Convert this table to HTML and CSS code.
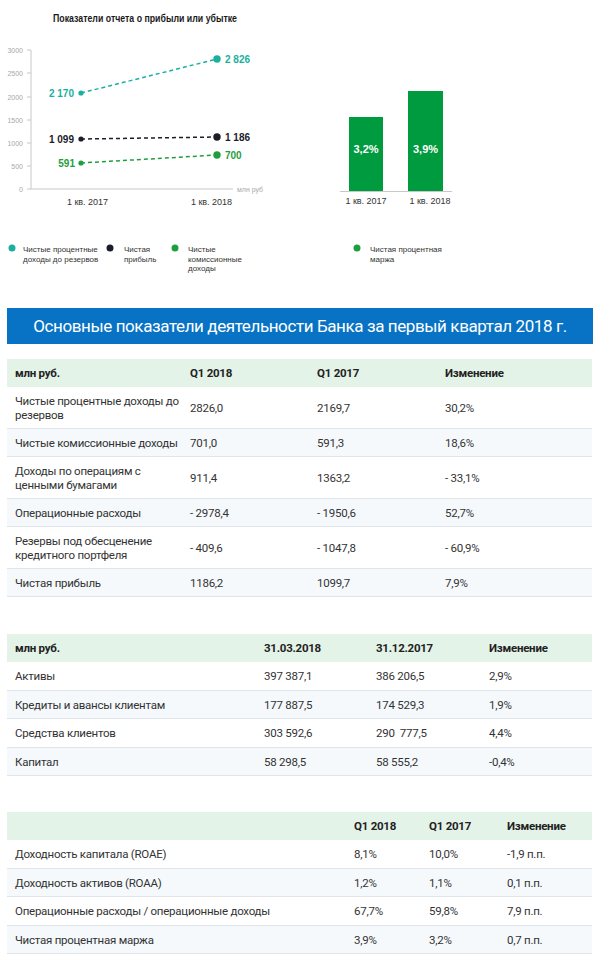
FILE: index.html
```html
<!DOCTYPE html>
<html lang="ru">
<head>
<meta charset="utf-8">
<title>Показатели</title>
<link rel="stylesheet" href="styles.css">
</head>
<body>
<div class="charts">
<svg class="chart-svg" width="600" height="300" viewBox="0 0 600 300" xmlns="http://www.w3.org/2000/svg">
  <text class="c-title" x="53" y="22" textLength="184" lengthAdjust="spacingAndGlyphs">Показатели отчета о прибыли  или убытке</text>
  <!-- axes -->
  <line x1="31" y1="50" x2="31" y2="189" class="c-axis"/>
  <line x1="31" y1="189" x2="233" y2="189" class="c-axis"/>
  <g class="c-ticks">
    <line x1="27" y1="50" x2="31" y2="50"/>
    <line x1="27" y1="73" x2="31" y2="73"/>
    <line x1="27" y1="97" x2="31" y2="97"/>
    <line x1="27" y1="120" x2="31" y2="120"/>
    <line x1="27" y1="143" x2="31" y2="143"/>
    <line x1="27" y1="166" x2="31" y2="166"/>
    <line x1="27" y1="189" x2="31" y2="189"/>
  </g>
  <g class="c-ylab">
    <text x="23" y="52.5">3000</text>
    <text x="23" y="75.5">2500</text>
    <text x="23" y="99.5">2000</text>
    <text x="23" y="122.5">1500</text>
    <text x="23" y="145.5">1000</text>
    <text x="23" y="168.5">500</text>
    <text x="23" y="191.5">0</text>
  </g>
  <text class="c-unit" x="237" y="191.5">млн руб</text>
  <!-- series -->
  <line x1="81" y1="93" x2="217" y2="59" class="c-dash teal-s"/>
  <line x1="81" y1="139" x2="217" y2="137" class="c-dash dark-s"/>
  <line x1="81" y1="163" x2="217" y2="155" class="c-dash green-s"/>
  <circle cx="81" cy="93" r="2.6" class="teal-f"/>
  <circle cx="217" cy="59" r="3.7" class="teal-f"/>
  <circle cx="81" cy="139" r="2.6" class="dark-f"/>
  <circle cx="217" cy="137" r="3.7" class="dark-f"/>
  <circle cx="81" cy="163" r="2.6" class="green-f"/>
  <circle cx="217" cy="155" r="3.7" class="green-f"/>
  <text class="c-val c-end teal-f" x="74" y="96.5">2 170</text>
  <text class="c-val teal-f" x="225" y="62.5">2 826</text>
  <text class="c-val c-end dark-f" x="74" y="142.5">1 099</text>
  <text class="c-val dark-f" x="225" y="140.5">1 186</text>
  <text class="c-val c-end green-f" x="75" y="166.5">591</text>
  <text class="c-val green-f" x="225" y="158.5">700</text>
  <text class="c-xlab" x="87.5" y="204.5">1 кв. 2017</text>
  <text class="c-xlab" x="211.5" y="204.5">1 кв. 2018</text>

  <!-- bar chart -->
  <line x1="340" y1="191.5" x2="452" y2="191.5" class="c-axis"/>
  <rect x="349" y="117" width="34" height="74" class="bar"/>
  <rect x="408" y="91" width="35" height="100" class="bar"/>
  <text class="c-barlab" x="366" y="153">3,2%</text>
  <text class="c-barlab" x="425.5" y="153">3,9%</text>
  <text class="c-xlab" x="366" y="204">1 кв. 2017</text>
  <text class="c-xlab" x="430" y="204">1 кв. 2018</text>

  <!-- legend -->
  <circle cx="12" cy="248" r="3.5" class="teal-f"/>
  <circle cx="110" cy="248" r="3.5" class="dark-f"/>
  <circle cx="175" cy="248" r="3.5" class="green-f"/>
  <circle cx="357" cy="248" r="3.5" class="green-f"/>
  <g class="c-leg">
    <text x="23" y="252">Чистые процентные</text>
    <text x="23" y="261.5">доходы до резервов</text>
    <text x="124" y="252">Чистая</text>
    <text x="124" y="261.5">прибыль</text>
    <text x="188" y="252">Чистые</text>
    <text x="188" y="261.5">комиссионные</text>
    <text x="188" y="271">доходы</text>
    <text x="370" y="252">Чистая процентная</text>
    <text x="370" y="261.5">маржа</text>
  </g>
</svg>
</div>

<div class="banner">Основные показатели деятельности Банка за первый квартал 2018 г.</div>

<table class="data t1">
  <colgroup><col class="t1-c1"><col class="t1-c2"><col class="t1-c3"><col></colgroup>
  <thead><tr><th>млн руб.</th><th>Q1 2018</th><th>Q1 2017</th><th>Изменение</th></tr></thead>
  <tbody>
    <tr><td>Чистые процентные доходы до резервов</td><td>2826,0</td><td>2169,7</td><td>30,2%</td></tr>
    <tr><td>Чистые комиссионные доходы</td><td>701,0</td><td>591,3</td><td>18,6%</td></tr>
    <tr><td>Доходы по операциям с ценными бумагами</td><td>911,4</td><td>1363,2</td><td>- 33,1%</td></tr>
    <tr><td>Операционные расходы</td><td>- 2978,4</td><td>- 1950,6</td><td>52,7%</td></tr>
    <tr><td>Резервы под обесценение кредитного портфеля</td><td>- 409,6</td><td>- 1047,8</td><td>- 60,9%</td></tr>
    <tr><td>Чистая прибыль</td><td>1186,2</td><td>1099,7</td><td>7,9%</td></tr>
  </tbody>
</table>

<table class="data t2">
  <colgroup><col class="t2-c1"><col class="t2-c2"><col class="t2-c3"><col></colgroup>
  <thead><tr><th>млн руб.</th><th>31.03.2018</th><th>31.12.2017</th><th>Изменение</th></tr></thead>
  <tbody>
    <tr><td>Активы</td><td>397 387,1</td><td>386 206,5</td><td>2,9%</td></tr>
    <tr><td>Кредиты и авансы клиентам</td><td>177 887,5</td><td>174 529,3</td><td>1,9%</td></tr>
    <tr><td>Средства клиентов</td><td>303 592,6</td><td>290&nbsp; 777,5</td><td>4,4%</td></tr>
    <tr><td>Капитал</td><td>58 298,5</td><td>58 555,2</td><td>-0,4%</td></tr>
  </tbody>
</table>

<table class="data t3">
  <colgroup><col class="t3-c1"><col class="t3-c2"><col class="t3-c3"><col></colgroup>
  <thead><tr><th></th><th>Q1 2018</th><th>Q1 2017</th><th>Изменение</th></tr></thead>
  <tbody>
    <tr><td>Доходность капитала (ROAE)</td><td>8,1%</td><td>10,0%</td><td>-1,9 п.п.</td></tr>
    <tr><td>Доходность активов (ROAA)</td><td>1,2%</td><td>1,1%</td><td>0,1 п.п.</td></tr>
    <tr><td>Операционные расходы / операционные доходы</td><td>67,7%</td><td>59,8%</td><td>7,9 п.п.</td></tr>
    <tr><td>Чистая процентная маржа</td><td>3,9%</td><td>3,2%</td><td>0,7 п.п.</td></tr>
  </tbody>
</table>
</body>
</html>
```

FILE: styles.css
```css
html, body {
  margin: 0;
  padding: 0;
  background: #ffffff;
}
body {
  width: 600px;
  font-family: Roboto, "Open Sans", sans-serif;
  color: #333333;
}
.charts {
  height: 300px;
}
.chart-svg {
  display: block;
  font-family: "Liberation Sans", Arial, sans-serif;
}
.c-title {
  font-size: 10px;
  font-weight: bold;
  fill: #1a1a1a;
}
.c-axis {
  stroke: #c8c8c8;
  stroke-width: 1;
}
.c-ticks line {
  stroke: #c8c8c8;
  stroke-width: 1;
}
.c-ylab text {
  font-size: 7px;
  fill: #a8a8a8;
  text-anchor: end;
}
.c-unit {
  font-size: 7px;
  fill: #a8a8a8;
}
.c-dash {
  stroke-width: 1.5;
  stroke-dasharray: 4 3;
  fill: none;
}
.teal-s { stroke: #1ab0a0; }
.dark-s { stroke: #1c1c2a; }
.green-s { stroke: #1f9e40; }
.teal-f { fill: #1ab0a0; }
.dark-f { fill: #1c1c2a; }
.green-f { fill: #1f9e40; }
.c-val {
  font-size: 10px;
  font-weight: bold;
}
.c-end {
  text-anchor: end;
}
.c-xlab {
  font-size: 9px;
  fill: #333333;
  text-anchor: middle;
}
.bar {
  fill: #009b3e;
}
.c-barlab {
  font-size: 11px;
  font-weight: bold;
  fill: #ffffff;
  text-anchor: middle;
}
.c-leg text {
  font-size: 8px;
  fill: #333333;
}

.banner {
  margin: 8px 7px 0;
  height: 36px;
  background: #0873c4;
  color: #ffffff;
  font-size: 17px;
  letter-spacing: -0.4px;
  white-space: nowrap;
  display: flex;
  align-items: center;
  justify-content: center;
}

.data {
  margin-left: 7px;
  width: 585px;
  table-layout: fixed;
  border-collapse: collapse;
  font-size: 11.5px;
  letter-spacing: -0.25px;
}
.data th,
.data td {
  text-align: left;
  vertical-align: middle;
  padding: 7px 0 6px 8px;
  line-height: 14px;
}
.data th {
  background: #e4f3e8;
  color: #222222;
  font-weight: bold;
  padding-top: 7px;
  padding-bottom: 7px;
}
.data td {
  border-bottom: 1px solid #dfe5ea;
}
.t2 td,
.t3 td {
  padding-bottom: 6.5px;
}
.data tbody tr:nth-child(even) td {
  background: #f5f9fc;
}
.t1 { margin-top: 15px; }
.t2 { margin-top: 37px; }
.t3 { margin-top: 36px; }

.t1-c1 { width: 175px; }
.t1-c2 { width: 127px; }
.t1-c3 { width: 128px; }

.t2-c1 { width: 249px; }
.t2-c2 { width: 112px; }
.t2-c3 { width: 113px; }

.t3-c1 { width: 339px; }
.t3-c2 { width: 75px; }
.t3-c3 { width: 78px; }
```
